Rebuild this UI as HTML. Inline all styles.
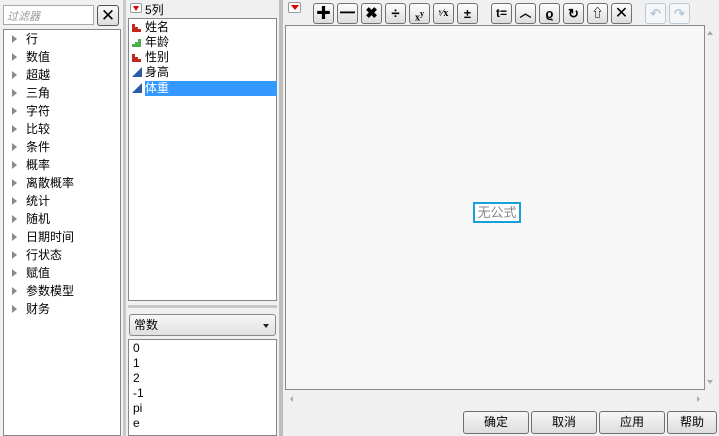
<!DOCTYPE html>
<html><head><meta charset="utf-8"><style>
*{margin:0;padding:0;box-sizing:border-box}
body{width:719px;height:436px;background:#f0f0f0;position:relative;overflow:hidden;font-family:"Liberation Sans","Noto Sans CJK SC",sans-serif;font-size:12px;color:#000}
.a{position:absolute}
.box{position:absolute;background:#fff;border:1px solid #828790}
.li{position:absolute;left:8px;height:16px;line-height:16px}
.li:before{content:"";position:absolute;left:0;top:4px;border-left:5px solid #8a8a8a;border-top:4px solid transparent;border-bottom:4px solid transparent}
.li span{margin-left:14px}
.tb{position:absolute;top:3px;width:21px;height:21px;border:1px solid #707070;border-radius:3px;background:linear-gradient(#fdfdfd,#dcdcdc);font-weight:bold;font-size:15px;text-align:center;line-height:19px;color:#000}
.btn{position:absolute;top:411px;height:23px;border:1px solid #707070;border-radius:3px;background:linear-gradient(#f6f6f6,#dddddd);text-align:center;line-height:21px;font-size:12px}
.col{position:absolute;left:3px;height:15px;line-height:15px}
.ic{display:inline-block;width:10px;height:10px;vertical-align:-1px;margin-right:3px}
</style></head><body>
<div class="box" style="left:3px;top:5px;width:91px;height:20px;border-color:#aaa"><span style="color:#999;font-style:italic;font-size:11px;position:absolute;left:3px;top:2px">过滤器</span></div>
<div class="a" style="left:97px;top:5px;width:22px;height:21px;border:1px solid #555;border-radius:3px;background:linear-gradient(#fafafa,#ddd);text-align:center;line-height:19px;font-size:17px">✕</div>
<div class="box" style="left:3px;top:29px;width:118px;height:407px">
<div class="li" style="top:1px"><span>行</span></div>
<div class="li" style="top:19px"><span>数值</span></div>
<div class="li" style="top:37px"><span>超越</span></div>
<div class="li" style="top:55px"><span>三角</span></div>
<div class="li" style="top:73px"><span>字符</span></div>
<div class="li" style="top:91px"><span>比较</span></div>
<div class="li" style="top:109px"><span>条件</span></div>
<div class="li" style="top:127px"><span>概率</span></div>
<div class="li" style="top:145px"><span>离散概率</span></div>
<div class="li" style="top:163px"><span>统计</span></div>
<div class="li" style="top:181px"><span>随机</span></div>
<div class="li" style="top:199px"><span>日期时间</span></div>
<div class="li" style="top:217px"><span>行状态</span></div>
<div class="li" style="top:235px"><span>赋值</span></div>
<div class="li" style="top:253px"><span>参数模型</span></div>
<div class="li" style="top:271px"><span>财务</span></div>
</div>
<div class="a" style="left:123px;top:0;width:3px;height:436px;background:#c8c8c8"></div>
<div class="a" style="left:130px;top:3px;width:12px;height:10px;border:1px solid #999;border-radius:2px;background:#fff"><div class="a" style="left:2px;top:2px;border-top:5px solid #d00;border-left:3px solid transparent;border-right:3px solid transparent"></div></div>
<div class="a" style="left:145px;top:1px">5列</div>
<div class="box" style="left:128px;top:18px;width:149px;height:283px">
<div class="col" style="top:1px"><svg class="ic" viewBox="0 0 10 10"><rect x="0" y="2" width="3" height="8" fill="#c0281c"/><rect x="3" y="5" width="3" height="5" fill="#c0281c"/><rect x="6" y="7" width="3" height="3" fill="#c0281c"/></svg>姓名</div>
<div class="col" style="top:16px"><svg class="ic" viewBox="0 0 10 10"><rect x="0" y="7" width="3" height="3" fill="#4caf50"/><rect x="3" y="5" width="3" height="5" fill="#4caf50"/><rect x="6" y="2" width="3" height="8" fill="#4caf50"/></svg>年龄</div>
<div class="col" style="top:31px"><svg class="ic" viewBox="0 0 10 10"><rect x="0" y="2" width="3" height="8" fill="#c0281c"/><rect x="3" y="5" width="3" height="5" fill="#c0281c"/><rect x="6" y="7" width="3" height="3" fill="#c0281c"/></svg>性别</div>
<div class="col" style="top:46px"><svg class="ic" viewBox="0 0 10 10"><polygon points="0,10 10,0 10,10" fill="#2a5caa"/></svg>身高</div>
<div class="col" style="top:62px;width:145px"><svg class="ic" viewBox="0 0 10 10"><polygon points="0,10 10,0 10,10" fill="#2a5caa"/></svg><span style="position:absolute;left:13px;top:0;width:132px;height:15px;background:#3399ff;color:#fff">体重</span></div>
</div>
<div class="a" style="left:128px;top:305px;width:149px;height:3px;background:#c8c8c8"></div>
<div class="a" style="left:129px;top:314px;width:147px;height:22px;border:1px solid #888;border-radius:3px;background:linear-gradient(#f8f8f8,#e0e0e0);line-height:20px;padding-left:4px">常数<div class="a" style="right:6px;top:9px;border-top:4px solid #222;border-left:3px solid transparent;border-right:3px solid transparent"></div></div>
<div class="box" style="left:128px;top:339px;width:149px;height:97px;line-height:15px;padding:1px 4px">0<br>1<br>2<br>-1<br>pi<br>e</div>
<div class="a" style="left:279px;top:0;width:4px;height:436px;background:#bdbdbd"></div>
<div class="a" style="left:288px;top:2px;width:13px;height:11px;border:1px solid #999;border-radius:2px;background:#fff"><div class="a" style="left:2px;top:2px;border-top:5px solid #d00;border-left:4px solid transparent;border-right:4px solid transparent"></div></div>
<div class="tb" style="left:313px">✚</div>
<div class="tb" style="left:337px">━</div>
<div class="tb" style="left:361px">✖</div>
<div class="tb" style="left:385px">÷</div>
<div class="tb" style="left:409px;font-family:'Liberation Serif';font-size:10px">x<sup style="font-size:8px">y</sup></div>
<div class="tb" style="left:433px;font-family:'Liberation Serif';font-size:10px">ʸ⁄x</div>
<div class="tb" style="left:457px;font-size:13px">±</div>
<div class="tb" style="left:491px;font-size:12px">t=</div>
<div class="tb" style="left:515px;font-size:12px">︿</div>
<div class="tb" style="left:539px;font-size:13px">ϱ</div>
<div class="tb" style="left:563px;font-size:13px">↻</div>
<div class="tb" style="left:587px;font-size:12px">⇧</div>
<div class="tb" style="left:611px;font-weight:normal;font-size:16px">✕</div>
<div class="tb" style="left:645px;border-color:#bcc8d4;background:#f4f6f8;color:#b8c8da;font-size:13px">↶</div>
<div class="tb" style="left:669px;border-color:#bcc8d4;background:#f4f6f8;color:#b8c8da;font-size:13px">↷</div>
<div class="a" style="left:285px;top:25px;width:420px;height:365px;background:#f7f7f7;border:1px solid #8a8a8a"></div>
<div class="a" style="left:473px;top:202px;width:48px;height:21px;border:2px solid #1aa0d8;background:#fff;color:#888;font-size:13px;line-height:17px;text-align:center">无公式</div>
<div class="a" style="left:707px;top:31px;border-bottom:4px solid #aaa;border-left:3px solid transparent;border-right:3px solid transparent"></div>
<div class="a" style="left:707px;top:380px;border-top:4px solid #aaa;border-left:3px solid transparent;border-right:3px solid transparent"></div>
<div class="a" style="left:290px;top:396px;border-right:3px solid #aaa;border-top:3px solid transparent;border-bottom:3px solid transparent"></div>
<div class="a" style="left:697px;top:396px;border-left:3px solid #aaa;border-top:3px solid transparent;border-bottom:3px solid transparent"></div>
<div class="btn" style="left:463px;width:66px">确定</div>
<div class="btn" style="left:531px;width:66px">取消</div>
<div class="btn" style="left:599px;width:66px">应用</div>
<div class="btn" style="left:667px;width:50px">帮助</div>
</body></html>
